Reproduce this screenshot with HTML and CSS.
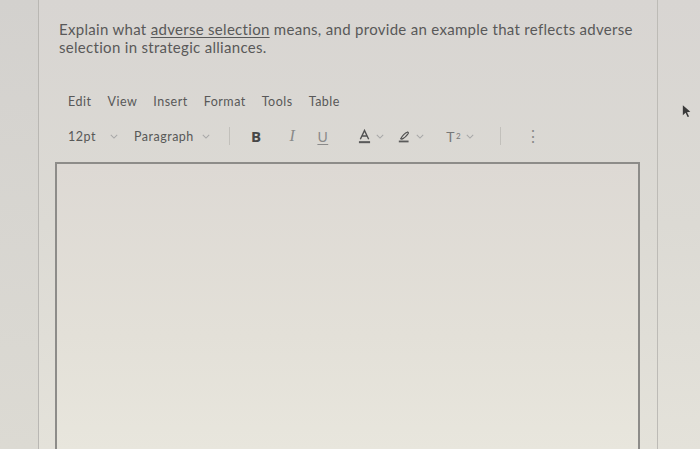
FILE: index.html
```html
<!DOCTYPE html>
<html>
<head>
<meta charset="utf-8">
<link rel="stylesheet" href="styles.css">
</head>
<body>
<div class="screen">
  <div class="gutter-left"></div>
  <div class="panel">
    <p class="question">Explain what <span class="term">adverse selection</span> means, and provide an example that reflects adverse selection in strategic alliances.</p>
    <nav class="menubar">
      <span>Edit</span><span>View</span><span>Insert</span><span>Format</span><span>Tools</span><span>Table</span>
    </nav>
    <div class="toolbar">
      <span class="drop size"><span class="lbl">12pt</span><svg class="chev" viewBox="0 0 10 6"><path d="M1 1l4 4 4-4"/></svg></span>
      <span class="drop para"><span class="lbl">Paragraph</span><svg class="chev" viewBox="0 0 10 6"><path d="M1 1l4 4 4-4"/></svg></span>
      <span class="sep"></span>
      <span class="btn bold">B</span>
      <span class="btn ital">I</span>
      <span class="btn under">U</span>
      <span class="btn color"><svg viewBox="0 0 14 16" class="ico"><path d="M2.5 11L7 1.5 11.5 11M4.2 7.5h5.6" fill="none" stroke="#505050" stroke-width="1.5"/><rect x="1" y="13" width="12" height="2.2" fill="#5a5a5a"/></svg><svg class="chev" viewBox="0 0 10 6"><path d="M1 1l4 4 4-4"/></svg></span>
      <span class="btn pen"><svg viewBox="0 0 16 16" class="ico"><path d="M3 11.5c2-4 6-8 9-9 .8.4 1 1 .6 1.8-2 3-5 6-8.5 7.2" fill="none" stroke="#505050" stroke-width="1.5"/><rect x="1" y="13" width="12" height="2.2" fill="#5a5a5a"/></svg><svg class="chev" viewBox="0 0 10 6"><path d="M1 1l4 4 4-4"/></svg></span>
      <span class="btn sup">T<sup>2</sup><svg class="chev" viewBox="0 0 10 6"><path d="M1 1l4 4 4-4"/></svg></span>
      <span class="sep"></span>
      <span class="btn more">⋮</span>
    </div>
    <div class="editor"></div>
  </div>
  <div class="gutter-right">
    <svg class="cursor" viewBox="0 0 12 16"><path d="M1 1l9 8-4 .5 2.5 5-1.8.8L4.3 10 1 13z" fill="#3a3a3a"/></svg>
  </div>
</div>
</body>
</html>
```
FILE: styles.css
```css
html, body {
  margin: 0;
  padding: 0;
  height: 100%;
}
body {
  font-family: Lato, "Open Sans", sans-serif;
  background: #d9d6d2;
  overflow: hidden;
}
.screen {
  display: flex;
  height: 449px;
  background: linear-gradient(180deg, #d8d5d2 0%, #dcdad4 50%, #e4e2da 100%);
}
.gutter-left {
  width: 38px;
  flex: none;
  background: linear-gradient(180deg, #d3d1ce 0%, #dcdad3 100%);
  border-right: 1px solid #b9b7b3;
}
.panel {
  flex: none;
  width: 618px;
  border-right: 1px solid #bdbbb6;
  display: flex;
  flex-direction: column;
}
.gutter-right {
  flex: 1;
  position: relative;
}
.cursor {
  position: absolute;
  left: 24px;
  top: 104px;
  width: 10px;
  height: 14px;
  filter: blur(0.6px);
}
.question {
  margin: 20px 0 0 20px;
  width: 594px;
  font-size: 15px;
  letter-spacing: 0.3px;
  line-height: 18px;
  color: #595959;
}
.term {
  text-decoration: underline;
  text-underline-offset: 2px;
}
.menubar {
  margin: 38px 0 0 29px;
  display: flex;
  gap: 16px;
  font-size: 12.5px;
  letter-spacing: 0.5px;
  color: #585858;
  line-height: 16px;
}
.toolbar {
  margin: 15px 0 0 29px;
  display: flex;
  align-items: center;
  height: 22px;
  font-size: 12.5px;
  letter-spacing: 0.5px;
  color: #585858;
}
.chev {
  width: 8px;
  height: 5px;
  fill: none;
  stroke: #a8a8a8;
  stroke-width: 1.3;
  flex: none;
}
.drop {
  display: inline-flex;
  align-items: center;
}
.size { width: 66px; }
.size .lbl { width: 42px; }
.para { width: 95px; }
.para .lbl { width: 68px; }
.sep {
  width: 1px;
  height: 18px;
  background: #c2c0bb;
}
.btn {
  display: inline-flex;
  align-items: center;
}
.bold {
  margin-left: 21px;
  font-family: "Open Sans", sans-serif;
  font-weight: 700;
  font-size: 15px;
  color: #474747;
}
.ital {
  margin-left: 28px;
  font-family: "Liberation Serif", serif;
  font-style: italic;
  font-size: 16px;
  color: #8a8a8a;
}
.under {
  margin-left: 22px;
  font-size: 14px;
  color: #8a8a8a;
  text-decoration: underline;
  text-underline-offset: 2px;
}
.ico {
  width: 13px;
  height: 15px;
}
.color { margin-left: 30px; }
.color .chev, .pen .chev, .sup .chev { margin-left: 5px; }
.pen { margin-left: 14px; }
.sup {
  margin-left: 22px;
  font-size: 14px;
  color: #777;
  margin-right: 26px;
}
.sup sup {
  font-size: 8px;
  vertical-align: 7px;
  margin-left: 1px;
}
.more {
  margin-left: 24px;
  font-size: 16px;
  color: #8a8a8a;
}
.editor {
  margin: 15px 0 0 16px;
  width: 581px;
  flex: 1;
  border: 2px solid #8d8c89;
  border-bottom: none;
  background: linear-gradient(180deg, #ddd9d4 0%, #e3e0d8 60%, #e8e6dd 100%);
}
```
